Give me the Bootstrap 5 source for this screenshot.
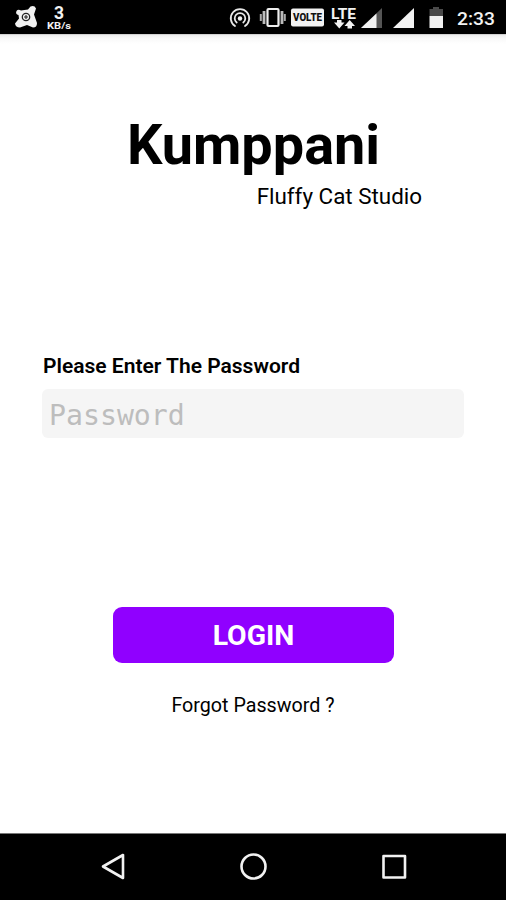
<!DOCTYPE html>
<html lang="en">
<head>
<meta charset="utf-8">
<meta name="viewport" content="width=device-width, initial-scale=1">
<title>Kumppani</title>
<link href="https://cdn.jsdelivr.net/npm/bootstrap@5.3.0/dist/css/bootstrap.min.css" rel="stylesheet">
<style>
body { font-family: Roboto, "Liberation Sans", sans-serif; color: #000; background: #fff; }
.screen { height: 900px; overflow: hidden; }
.status-bar { height: 34px; background: #000; }
.status-shade { height: 10px; background: linear-gradient(#b8b8b8 0, #ededed 1px, #f8f8f8 4px, #fff 10px); }
.login-area { padding: 0 42px; }
.brand-title { font-size: 55.8px; line-height: 66px; font-weight: 700; margin: 68px 0 0 1px; }
.brand-sub { font-size: 22.4px; line-height: 28px; margin: 4px 42px 0 0; }
.field-label { font-size: 21px; line-height: 24px; font-weight: 600; margin: 144px 0 11px 1px; }
.field-input.form-control { height: 49px; border: 0; border-radius: 6px; background: #f5f5f5; padding: 4px 8px 0 7px; font: 28.2px "DejaVu Sans Mono", monospace; }
.field-input::placeholder { color: #bdbdbd; opacity: 1; }
.login-btn.btn { width: 281px; height: 56px; margin-top: 169px; padding: 2px 0 0 1px; border: 0; border-radius: 9px; background: #9000ff; color: #fff; font-size: 28.4px; line-height: 54px; font-weight: 700; }
.forgot { font-size: 19.7px; line-height: 24px; margin-top: 31px; color: #000; }
.nav-keys { height: 67px; background: #000; border-top: 1px solid #777; }
</style>
</head>
<body>
<div class="screen d-flex flex-column">
  <header class="status-bar flex-shrink-0">
    <svg class="d-block" width="506" height="34" viewBox="0 0 506 34" font-family="Roboto, sans-serif" fill="#f2f2f2">
      <path d="M16.500 11Q18 9 21 10.500L28 9.500L30.500 6.500Q34.500 5 36 8.500L34 14.500L37 23Q37 27.500 33 27.500L27 25L20 27.500Q15.500 27.500 15 23.500L19 18.500L18.500 15Q15 14 16.500 11Z"/>
      <circle cx="26" cy="17" r="3.700" fill="none" stroke="#222" stroke-width="1.300"/>
      <path d="M26 15v4M24 17h4" stroke="#222" stroke-width="1.100"/>
      <text x="54" y="18.500" font-size="17.500" font-weight="700">3</text>
      <text x="47" y="28.500" font-size="9" font-weight="700" textLength="24" lengthAdjust="spacingAndGlyphs">KB/s</text>
      <g fill="none" stroke="#e8e8e8" stroke-width="1.800" stroke-linecap="round">
        <path d="M235 26A9.200 9.200 0 1 1 245 26"/>
        <path d="M236.700 22.500A5.300 5.300 0 1 1 243.300 22.500"/>
      </g>
      <circle cx="240" cy="18.500" r="2.200"/>
      <rect x="267.500" y="9" width="11" height="17" rx="1" fill="none" stroke="#eee" stroke-width="2.200"/>
      <path d="M264 11v13M282 11v13" stroke="#bbb" stroke-width="2.800"/>
      <path d="M260.800 14v7M284.800 14v7" stroke="#aaa" stroke-width="2"/>
      <rect x="291" y="8.500" width="33" height="18" rx="2"/>
      <text x="293" y="21" font-size="10" font-weight="900" fill="#111" textLength="29" lengthAdjust="spacingAndGlyphs">VOLTE</text>
      <text x="331" y="18.500" font-size="15.500" font-weight="700" textLength="25" lengthAdjust="spacingAndGlyphs">LTE</text>
      <path d="M337 20h4.500v2.500h3L339.300 28.500L334 22.500h3ZM347.500 28.500h4.500v-2.500h3L349.700 20L344.500 26h3Z"/>
      <path d="M382 8V28H361Z" fill="#555"/>
      <path d="M376.500 13.500V28H361Z"/>
      <path d="M414 8V28H393Z"/>
      <path d="M429.500 9H433V7h6v2h4v7h-13.500Z" fill="#4a4a4a"/>
      <path d="M429.500 16H443V28h-13.500Z"/>
      <text x="457" y="25" font-size="19" font-weight="500" textLength="38" lengthAdjust="spacingAndGlyphs">2:33</text>
    </svg>
  </header>
  <div class="status-shade flex-shrink-0"></div>
  <main class="login-area flex-grow-1 d-flex flex-column">
    <h1 class="brand-title text-center">Kumppani</h1>
    <p class="brand-sub text-end">Fluffy Cat Studio</p>
    <label class="field-label" for="password">Please Enter The Password</label>
    <input class="form-control field-input" id="password" type="password" placeholder="Password">
    <button class="btn login-btn align-self-center" type="button">LOGIN</button>
    <a class="forgot text-center text-decoration-none" href="#">Forgot Password ?</a>
  </main>
  <footer class="nav-keys flex-shrink-0">
    <svg class="d-block" width="506" height="66" viewBox="0 834 506 66" fill="none" stroke="#f2f2f2" stroke-width="2.600" stroke-linejoin="round">
      <path d="M123 855V878L103 866.500Z"/>
      <circle cx="253.500" cy="866.500" r="12"/>
      <rect x="383.500" y="856" width="21.500" height="21.500"/>
    </svg>
  </footer>
</div>
<script src="https://cdn.jsdelivr.net/npm/bootstrap@5.3.0/dist/js/bootstrap.bundle.min.js"></script>
</body>
</html>
